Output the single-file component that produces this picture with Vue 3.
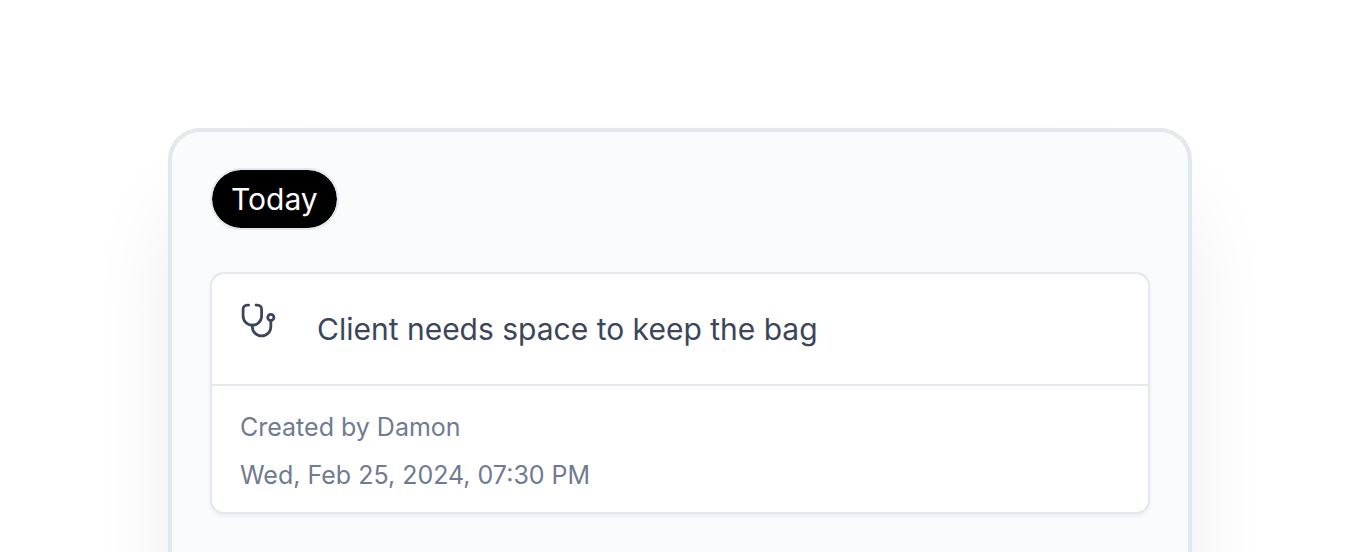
<script setup>
const day = 'Today'
const note = {
  title: 'Client needs space to keep the bag',
  author: 'Created by Damon',
  date: 'Wed, Feb 25, 2024, 07:30 PM',
}
</script>

<template>
  <main class="page">
    <section class="panel">
      <h2 class="day">{{ day }}</h2>
      <article class="card">
        <header class="card-head">
          <svg class="icon" viewBox="0 0 24 24" fill="none" stroke="currentColor" stroke-width="1.8" stroke-linecap="round" stroke-linejoin="round" aria-hidden="true">
            <path d="M5.6 2H4.6A2.6 2.6 0 0 0 2 4.6V9a6 6 0 0 0 6 6 6 6 0 0 0 6-6V4.6A2.6 2.6 0 0 0 11.4 2h-1" />
            <path d="M8 15v1a6 6 0 0 0 6 6 6 6 0 0 0 6-6v-4" />
            <circle cx="20" cy="10" r="2" />
          </svg>
          <h3 class="title">{{ note.title }}</h3>
        </header>
        <div class="meta">
          <p>{{ note.author }}</p>
          <p>{{ note.date }}</p>
        </div>
      </article>
    </section>
  </main>
</template>

<style scoped>
.page {
  box-sizing: border-box;
  height: 100vh;
  padding: 128px 172px 0 168px;
  overflow: hidden;
  background: #fff;
  font-family: Inter, "Liberation Sans", sans-serif;
}
.panel {
  box-sizing: border-box;
  min-height: 100vh;
  padding: 36px 38px;
  border: 4px solid #e0e8f0;
  border-top-color: #e4e8ec;
  border-radius: 32px;
  background: #f9fbfd;
  box-shadow: 0 60px 100px -24px rgba(15, 23, 42, 0.12);
}
.day {
  width: fit-content;
  margin: 0 0 42px;
  padding: 0 19px;
  border: 2px solid #e2e8f0;
  border-radius: 32px;
  background: #000;
  background-clip: padding-box;
  color: #fff;
  font-size: 30px;
  font-weight: 400;
  line-height: 58px;
}
.card {
  border: 2px solid #e4e7ed;
  border-radius: 14px;
  background: #fff;
  box-shadow: 0 2px 4px rgba(15, 23, 42, 0.06);
}
.card-head {
  display: flex;
  align-items: flex-start;
  gap: 40px;
  padding: 28px;
  border-bottom: 2px solid #e4e7ed;
  color: #3b465a;
}
.icon {
  flex: none;
  width: 37px;
  height: 37px;
}
.title {
  margin: 0;
  padding: 4px 0;
  font-size: 30px;
  font-weight: 400;
  line-height: 46px;
}
.meta {
  padding: 17px 28px 13px;
  color: #6f7b91;
  font-size: 25px;
  line-height: 48px;
}
.meta p {
  margin: 0;
}
</style>
